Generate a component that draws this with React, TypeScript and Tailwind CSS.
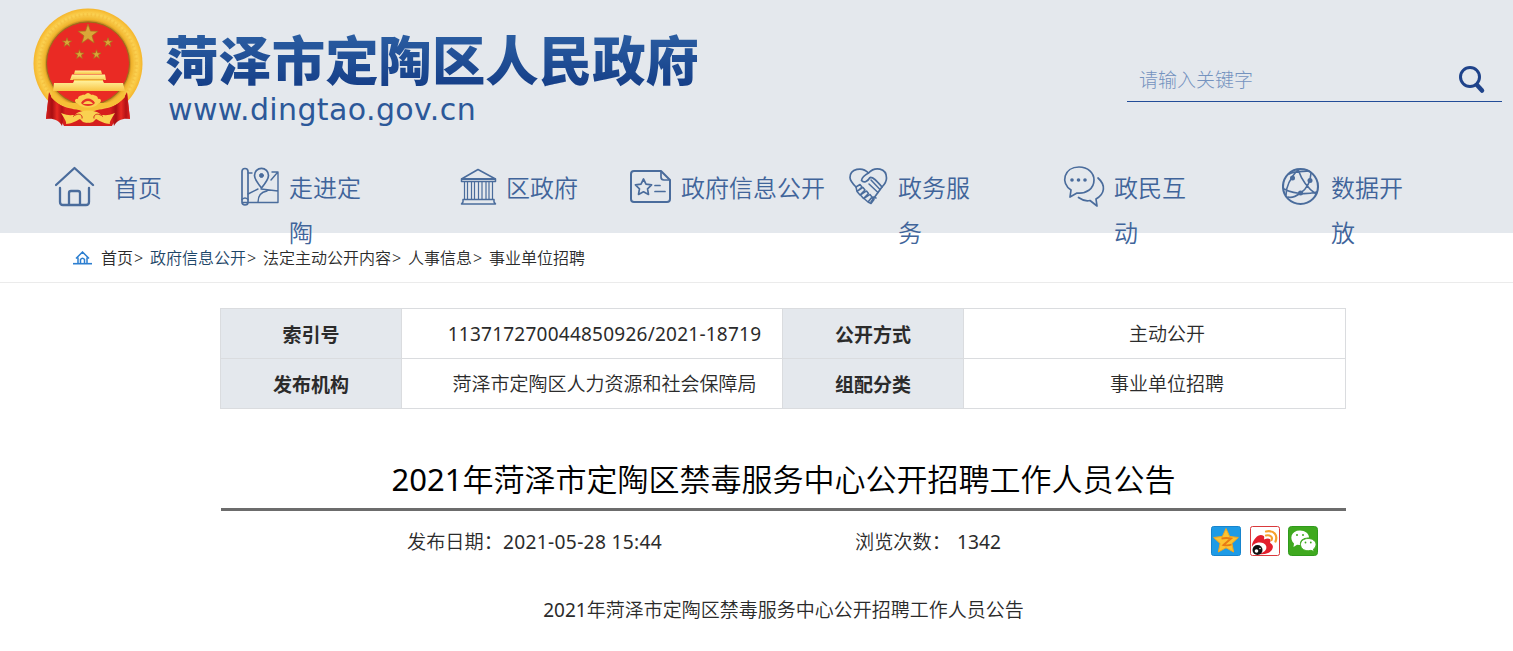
import type { ReactNode } from 'react';

const STROKE = '#4a6c9c';

function starPoints(cx: number, cy: number, r: number, inner = 0.4) {
  return Array.from({ length: 10 }, (_, i) => {
    const radius = i % 2 === 0 ? r : r * inner;
    const angle = (Math.PI / 5) * i - Math.PI / 2;
    return `${(cx + radius * Math.cos(angle)).toFixed(2)},${(cy + radius * Math.sin(angle)).toFixed(2)}`;
  }).join(' ');
}

function Emblem() {
  return (
    <svg width="110" height="120" viewBox="0 0 110 120" className="shrink-0">
      <defs>
        <radialGradient id="ring" cx="0.5" cy="0.5" r="0.5">
          <stop offset="0.76" stopColor="#b98322" />
          <stop offset="0.8" stopColor="#f0b32c" />
          <stop offset="0.9" stopColor="#fbd252" />
          <stop offset="1" stopColor="#f5b62c" />
        </radialGradient>
        <linearGradient id="gold" x1="0" y1="0" x2="0" y2="1">
          <stop offset="0" stopColor="#fff09a" />
          <stop offset="1" stopColor="#f8c545" />
        </linearGradient>
        <linearGradient id="drape" x1="0" y1="0" x2="1" y2="0">
          <stop offset="0" stopColor="#d5201d" />
          <stop offset="0.3" stopColor="#a80f12" />
          <stop offset="0.55" stopColor="#e82a22" />
          <stop offset="0.8" stopColor="#b41215" />
          <stop offset="1" stopColor="#e0241f" />
        </linearGradient>
      </defs>
      <ellipse cx="55" cy="55.500" rx="54.5" ry="55" fill="url(#ring)" />
      <ellipse cx="55" cy="55.500" rx="48.500" ry="49" fill="none" stroke="#eda92a" strokeWidth="3" strokeDasharray="1.500 2.500" opacity="0.3" />
      <circle cx="55" cy="55.500" r="41.500" fill="#ea2a24" stroke="#9c6d1b" strokeWidth="1" />
      <g fill="#dba638" stroke="#a8741c" strokeWidth="0.7">
        <polygon points={starPoints(55, 26.5, 10.5)} />
        <polygon points={starPoints(34, 34.5, 4.8)} />
        <polygon points={starPoints(75, 34.5, 4.8)} />
        <polygon points={starPoints(46.5, 46.5, 4.8)} />
        <polygon points={starPoints(63.5, 46.5, 4.8)} />
      </g>
      <g fill="url(#gold)">
        <path d="M42 62.500h26l1 3.500H41z" />
        <path d="M39 66.500h33l1 5.500h-3v2H41v-2h-4z" />
        <path d="M21 75h19l1-2h29l1 2h19l2 8H20z" />
      </g>
      <path d="M40 71.500h31" stroke="#d9942a" strokeWidth="0.7" />
      <path d="M16 84C24 101 40 101 55 103C70 101 86 101 94 84L97 111C86 108 82 112 79 118H31C28 112 24 108 13 111z" fill="#d71f1d" />
      <path d="M16 85C20 93 26 97 33 100L29 118C26 112 20 110 13 111z" fill="url(#drape)" />
      <path d="M94 85C90 93 84 97 77 100L81 118C84 112 90 110 97 111z" fill="url(#drape)" />
      <path d="M19 84C31 99 40 93 46 96C51 101 59 101 64 96C70 93 79 99 91 84L92 89C82 101 72 98 66 101C59 105 51 105 44 101C38 98 28 101 18 89z" fill="#f6bf36" />
      <path d="M45 96C41 95 41 90 45 91C45 87 49 88 50 86.500C52 88 53 85 55 85C57 85 58 88 60 86.500C61 88 65 87 65 91C69 90 69 95 65 96C61 101 49 101 45 96z" fill="#fbd050" />
      <path d="M48 95C51 89 59 89 62 95C59 99 51 99 48 95z" fill="#e63426" />
      <path d="M50 96C52 92 58 92 60 96z" fill="#fbd050" />
      <path d="M28 105C35 108 38 107 42 107C46 101 64 101 68 107C72 107 75 108 82 105C79 110 76 114 77 116C72 116 67 113 63 111L60 114L55 115.500L50 114L47 111C43 113 38 116 33 116C34 114 31 110 28 105z" fill="#fad150" />
      <path d="M40 108.500C46 104 50 107 49 110.500M70 108.500C64 104 60 107 61 110.500" stroke="#d5301f" strokeWidth="1" fill="none" />
      <path d="M37 118C47 113.500 63 113.500 73 118z" fill="#d3201e" />
    </svg>
  );
}

function NavIcon({ children }: { children: ReactNode }) {
  return (
    <svg
      width="42"
      height="42"
      viewBox="0 0 42 42"
      className="mt-[16px] shrink-0"
      fill="none"
      stroke={STROKE}
      strokeWidth="1.7"
      strokeLinecap="round"
      strokeLinejoin="round"
    >
      {children}
    </svg>
  );
}

const icons = {
  home: (
    <>
      <path d="M1 19L19.500 2L38 19" strokeWidth="2.300" />
      <path d="M5 22v14q0 3 3 3h23q3 0 3-3V22" strokeWidth="2.300" />
      <path d="M14 38V27q0-2 2-2h7q2 0 2 2v11" strokeWidth="2.300" />
    </>
  ),
  map: (
    <>
      <path d="M2 5.500q0-3 3-3t3 3V36q0 3-3 3t-3-3z" />
      <path d="M2 33.500q3-3 6 0M3 36.500h4M8 7h4M8 36.500h30V6h-6M8 28l10-5M21 23l17 2M18 36c0-7 3-10 9-11M31 14l6-7" strokeWidth="1.4" />
      <path d="M21.500 22C17 16.500 14.500 13 14.500 9.500a7 7.200 0 0 1 14 0C28.500 13 26 16.500 21.500 22z" />
      <circle cx="21.500" cy="9.500" r="2" fill={STROKE} strokeWidth="1" />
    </>
  ),
  bank: (
    <>
      <path d="M1.500 13L18 3.500L35.500 13v2.500h-34z" strokeWidth="1.500" />
      <path d="M2 13h33" strokeWidth="2" />
      <path d="M4.500 16v17M7.500 16v17M11.500 16v17M14.500 16v17M18.500 16v17M22 16v17M26 16v17M29 16v17M32.500 16v17" strokeWidth="1.200" />
      <path d="M3 33.500h31v2.500l1.500 2h-34L3 36z" strokeWidth="1.500" />
    </>
  ),
  certificate: (
    <>
      <path d="M4 5h27l9 9v19q0 3-3 3H4q-3 0-3-3V8q0-3 3-3z" strokeWidth="2" />
      <path d="M31 5.500V11q0 3 3 3h5.500" />
      <polygon points={starPoints(13.5, 21.5, 8.5, 0.5)} />
      <path d="M25 19.500h5M25 25.500h10" />
    </>
  ),
  handshake: (
    <>
      <path d="M7 21C2 16 1 14 1 11.500C1 3 13 0 19.500 7C26 0 37.500 2 37.500 12C37.500 15 36 18 33 21L22 36" />
      <path d="M19.500 7C16 9 12.500 12 12.500 14.500C15 17.500 19 15 21 11.500C24 11 27 14 33 21" />
      <path d="M7 21l4-2.500 2 2.500-5 4.500zM8 25.500l6-4 2 2.500-5 5zM11.500 29l6-4 2 2.500-5 5zM15 32.500l6-4 2 2.500-4 5zM19 36l4-4.500 2 2-3 4zM22 14l9 9.500M20 18l9 8.500M24 31l3 1" strokeWidth="1.500" />
    </>
  ),
  chat: (
    <>
      <path d="M7 31L8 24C-3 17 1 1 16 1C25 1 31 7 31 14C31 23 23 28 14 27z" />
      <path d="M35 12C43 19 42 28 33 33L34 40L27 34.500C23 35.500 19 34 15.500 31.500" />
      <g fill={STROKE} stroke="none">
        <circle cx="9" cy="14" r="1.800" />
        <circle cx="15.500" cy="14" r="1.800" />
        <circle cx="22" cy="14" r="1.800" />
      </g>
    </>
  ),
  globe: (
    <>
      <circle cx="18.500" cy="20.500" r="17.500" strokeWidth="2.100" />
      <path d="M7 8C13 4 22 6 27 5M16 3.500C11 9 4 19 4 29M16 3.500C19 12 25 22 34 28M29 7C28.500 16 26 22 18.500 27C13 31 9 32 6 31M2 23C10 27 22 29 35 26" strokeWidth="1.600" />
      <g fill={STROKE} stroke="none">
        <circle cx="10.500" cy="12" r="2.500" />
        <circle cx="28" cy="14.500" r="2.500" />
        <circle cx="18.500" cy="27" r="2.500" />
      </g>
    </>
  ),
};

// Labels longer than three characters wrap unless `text` gives them the room
const navItems = [
  { label: '首页', icon: icons.home, item: 'w-[185px]', text: 'ml-[17px] w-[72px]' },
  { label: '走进定陶', icon: icons.map, item: 'w-[220px]', text: 'ml-[7px] w-[73px]' },
  { label: '区政府', icon: icons.bank, item: 'w-[170px]', text: 'ml-[4px] w-[73px]' },
  { label: '政府信息公开', icon: icons.certificate, item: 'w-[219px]', text: 'ml-[9px] w-[145px]' },
  { label: '政务服务', icon: icons.handshake, item: 'w-[214px]', text: 'ml-[7px] w-[73px]' },
  { label: '政民互动', icon: icons.chat, item: 'w-[219px]', text: 'ml-[9px] w-[73px]' },
  { label: '数据开放', icon: icons.globe, item: 'w-[170px]', text: 'ml-[7px] w-[73px]' },
];

const crumbs = ['首页', '政府信息公开', '法定主动公开内容', '人事信息', '事业单位招聘'];

function Header() {
  return (
    <header className="h-[233px] bg-[#e4e8ed]">
      <div className="flex h-[150px] items-start">
        <div className="ml-[33px] mt-[8px]">
          <Emblem />
        </div>
        <div className="ml-[22px] mt-[31px] whitespace-nowrap">
          <div className="h-[60px] bg-gradient-to-b from-[#2c5fa3] to-[#143c86] bg-clip-text text-[53.4px] font-black leading-[60px] text-transparent">
            菏泽市定陶区人民政府
          </div>
          <div className="ml-[3px] h-[36px] font-['DejaVu_Sans'] text-[30px] font-normal leading-[37px] tracking-[0.38px] text-[#2c5899]">
            www.dingtao.gov.cn
          </div>
        </div>
        <div className="ml-auto mr-[11px] mt-[58px] flex h-[44px] w-[375px] items-center border-b border-[#234d98] pl-[12px] pr-[16px]">
          <span className="flex-1 text-[19px] font-light leading-[44px] text-[#7493bf]">请输入关键字</span>
          <svg width="28" height="30" viewBox="0 0 28 30" fill="none" stroke="#1f438a">
            <circle cx="12" cy="12" r="9.500" strokeWidth="3" />
            <path d="M19 20l5 5.500" strokeWidth="4.500" strokeLinecap="round" />
          </svg>
        </div>
      </div>
      <nav className="flex pl-[55px]">
        {navItems.map((nav) => (
          <a key={nav.label} className={`flex shrink-0 items-start ${nav.item}`}>
            <NavIcon>{nav.icon}</NavIcon>
            <span className={`mt-[15px] shrink-0 text-[24px] leading-[45px] text-[#40649a] ${nav.text}`}>{nav.label}</span>
          </a>
        ))}
      </nav>
    </header>
  );
}

function Breadcrumb() {
  return (
    <div className="flex h-[50px] items-center border-b border-[#ebebeb] pl-[73px] text-[16px] text-[#2b2b2b]">
      <svg width="19" height="14" viewBox="0 0 19 14" fill="none" stroke="#2d7fd0" strokeWidth="1.500">
        <path d="M3 7.500L9.500 1L16 7.500M5 6.500V12M14 6.500V12M7.500 12V8.500q2-2.500 4 0V12" />
        <path d="M0 12.700h19" strokeWidth="1.600" />
      </svg>
      <div className="ml-[9px] flex">
        {crumbs.map((crumb, i) => (
          <span key={crumb} className="flex">
            <span className={i === 1 ? 'text-[#1d4668]' : ''}>{crumb}</span>
            {i < crumbs.length - 1 && <span className="w-[17px] pl-px">&gt;</span>}
          </span>
        ))}
      </div>
    </div>
  );
}

function Label({ children }: { children: ReactNode }) {
  return (
    <div className="h-[50px] border-b border-r border-[#dadcdf] bg-[#e4e8ed] text-center font-bold leading-[52px]">
      {children}
    </div>
  );
}

function Value({ children }: { children: ReactNode }) {
  return (
    <div className="h-[50px] whitespace-nowrap border-b border-r border-[#dadcdf] pl-[25px] text-center">
      {children}
    </div>
  );
}

function InfoTable() {
  return (
    <div className="ml-[220px] mt-[25px] grid w-[1126px] grid-cols-[181px_381px_181px_382px] border-l border-t border-[#dadcdf] text-[19px] leading-[51px] text-[#2b2b2b]">
      <Label>索引号</Label>
      <Value>
        <span className="font-normal tracking-[0.24px]">113717270044850926/2021-18719</span>
      </Value>
      <Label>公开方式</Label>
      <Value>主动公开</Value>
      <Label>发布机构</Label>
      <Value>菏泽市定陶区人力资源和社会保障局</Value>
      <Label>组配分类</Label>
      <Value>事业单位招聘</Value>
    </div>
  );
}

function ShareIcons() {
  return (
    <div className="mb-[2px] flex gap-[8.500px]">
      <svg width="30" height="30" viewBox="0 0 30 30">
        <rect x="0.500" y="0.500" width="29" height="29" rx="2" fill="#1e9be6" stroke="#1784cd" />
        <polygon points={starPoints(15, 15.5, 13, 0.48)} fill="#fdc331" stroke="#f4a51f" strokeWidth="1" strokeLinejoin="round" />
        <path d="M10.500 12.500Q15 11.500 20 12.500L12.500 19Q17 20 20.500 18.500" fill="none" stroke="#e87c14" strokeWidth="1.900" />
      </svg>
      <svg width="30" height="30" viewBox="0 0 30 30">
        <rect x="0.500" y="0.500" width="29" height="29" rx="2" fill="#fff" stroke="#d9393c" />
        <path d="M2 19C3 13 9 7 13 9.500C15 10.500 14 12 14 13.500C18 11.500 22 12 20 17C25 19 23 25 18 27C11 30 1 28 2 19z" fill="#e21f2d" />
        <ellipse cx="9" cy="22" rx="7.500" ry="5.500" fill="#fff" transform="rotate(-10 9 22)" />
        <circle cx="7.500" cy="24" r="5" fill="#111" />
        <circle cx="6.500" cy="25" r="1.800" fill="#fff" />
        <circle cx="10" cy="22.500" r="0.800" fill="#fff" />
        <path d="M16 5.500C24 4 28 9 25.500 15.500M16 9.500C20 8.500 23 11 21.500 14" fill="none" stroke="#f6a02c" strokeWidth="2.200" strokeLinecap="round" />
      </svg>
      <svg width="30" height="30" viewBox="0 0 30 30">
        <rect x="0.500" y="0.500" width="29" height="29" rx="3" fill="#3fa91f" stroke="#2f9a1c" />
        <path d="M12 4.500C17 4.500 21 7.500 21 11.500C16 11 11 14 12 19L9 18.700L5.500 21L6 17.500C1 13 3 4.500 12 4.500z" fill="#fff" />
        <path d="M20 12.500C25 12.500 28 15.500 28 18.500C28 20.500 27 22 25.500 23L26 25.500L23 24.300C17 26 12.500 22.500 12.500 18.500C12.500 15 16 12.500 20 12.500z" fill="#fff" stroke="#3fa91f" strokeWidth="0.900" />
        <g fill="#3fa91f">
          <circle cx="9" cy="9" r="1" />
          <circle cx="15" cy="9" r="1" />
          <circle cx="17.500" cy="16.500" r="0.900" />
          <circle cx="22.800" cy="16.500" r="0.900" />
        </g>
      </svg>
    </div>
  );
}

export default function App() {
  return (
    <div className="h-[651px] overflow-hidden bg-white font-['Noto_Sans','Noto_Sans_CJK_SC',sans-serif] font-[350]">
      <Header />
      <Breadcrumb />
      <InfoTable />
      <article className="ml-[221px] w-[1125px] text-[#2b2b2b]">
        <h1 className="mt-[41px] h-[61px] whitespace-nowrap border-b-[3px] border-[#6c6c6c] text-center text-[31px] leading-[58px] text-black">
          <span className="font-normal">2021</span>年菏泽市定陶区禁毒服务中心公开招聘工作人员公告
        </h1>
        <div className="flex h-[62px] items-center pl-[186px] pr-[28px] text-[19.200px]">
          <span className="w-[96px] whitespace-nowrap">发布日期：</span>
          <span className="w-[352px] font-normal tracking-[0.3px]">2021-05-28 15:44</span>
          <span className="w-[102px] whitespace-nowrap">浏览次数：</span>
          <span className="flex-1 font-normal">1342</span>
          <ShareIcons />
        </div>
        <p className="mt-[12px] text-center text-[19px] leading-[50px]">
          <span className="font-normal">2021</span>年菏泽市定陶区禁毒服务中心公开招聘工作人员公告
        </p>
      </article>
    </div>
  );
}
